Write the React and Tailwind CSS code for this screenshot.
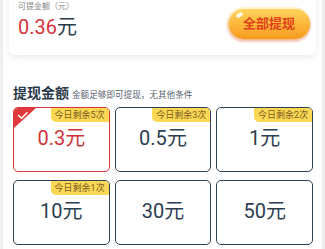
import React from "react";

const font = { fontFamily: "Roboto, 'Noto Sans CJK SC', sans-serif" };

const items = [
  { v: "0.3", badge: "今日剩余5次", sel: true },
  { v: "0.5", badge: "今日剩余3次" },
  { v: "1", badge: "今日剩余2次" },
  { v: "10", badge: "今日剩余1次" },
  { v: "30" },
  { v: "50" },
];

function Card({ v, badge, sel }) {
  return (
    <div
      className={
        "relative h-[65px] rounded-[5px] overflow-hidden flex items-center justify-center pb-[4px] " +
        (sel ? "border-[1.5px] border-[#d9363b]" : "border-[1.5px] border-[#2e4154]")
      }
    >
      {sel && (
        <svg className="absolute left-0 top-0" width="22" height="20" viewBox="0 0 22 20">
          <polygon points="0,0 22,0 0,20" fill="#e03a3c" />
          <path d="M4.5 7.5 L7.5 10.2 L13 4.8" stroke="#fff" strokeWidth="1.6" fill="none" strokeLinecap="round" strokeLinejoin="round" />
        </svg>
      )}
      {badge && (
        <div className="absolute right-0 top-0 h-[14px] px-[4px] bg-[#fcd955] rounded-bl-[5px] flex items-center text-[9px] leading-none text-[#7a5a22] whitespace-nowrap">
          {badge}
        </div>
      )}
      <span className={"text-[20px] leading-none " + (sel ? "text-[#d0343a]" : "text-[#2d3e50]")}>
        {v}元
      </span>
    </div>
  );
}

export default function App() {
  return (
    <div className="w-[325px] h-[249px] overflow-hidden bg-[#efefef] px-[3px]" style={font}>
      <div className="h-full bg-white flex flex-col">
        <div className="mx-[6px] -mt-[20px] h-[75px] shrink-0 pt-[20px] rounded-[6px] bg-white shadow-[0_2px_6px_rgba(0,0,0,0.09)] flex items-start justify-between pl-[9px] pr-[5px]">
          <div className="flex flex-col">
            <div className="text-[8px] leading-[13px] text-[#8a8a8a]">可提金额（元）</div>
            <div className="mt-[2px] text-[20px] leading-[24px]">
              <span className="text-[#d6343a]">0.36</span>
              <span className="text-[#2b3a48]">元</span>
            </div>
          </div>
          <div className="mt-[7px] relative w-[84px] h-[33px] rounded-full p-[1.5px] bg-gradient-to-b from-[#fff3cf] to-[#f5b98a] shadow-[0_2px_2px_rgba(220,120,90,0.4)]">
            <div className="relative w-full h-full rounded-full bg-gradient-to-b from-[#ffd45c] via-[#fbb83a] to-[#f69a1e] flex items-center justify-center">
              <div className="absolute left-[7px] top-[4px] w-[7px] h-[4px] rounded-full bg-white/90 rotate-[-30deg]" />
              <span className="text-[13px] font-bold leading-none text-[#e0401a]">全部提现</span>
            </div>
          </div>
        </div>

        <div className="mt-[28px] px-[10px] flex items-baseline">
          <span className="text-[14px] font-bold leading-[20px] text-[#2b3a48]">提现金额</span>
          <span className="ml-[3px] text-[8.6px] text-[#5a6470]">金额足够即可提现，无其他条件</span>
        </div>

        <div className="mt-[4px] pl-[10px] pr-[9px] grid grid-cols-3 gap-x-[5px] gap-y-[8px]">
          {items.map((it, i) => (
            <Card key={i} {...it} />
          ))}
        </div>
      </div>
    </div>
  );
}
